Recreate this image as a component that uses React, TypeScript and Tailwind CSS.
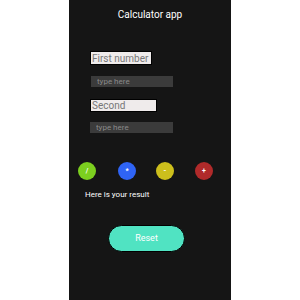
export default function App() {
  const ops = [
    { label: "/", bg: "bg-[#7ccf1f]", ml: "ml-[9px]" },
    { label: "*", bg: "bg-[#2f64f5]", ml: "ml-[22px]" },
    { label: "-", bg: "bg-[#cdbf1c]", ml: "ml-[20px]" },
    { label: "+", bg: "bg-[#b02a2a]", ml: "ml-[21px]" },
  ];

  return (
    <div className="flex h-[300px] w-[300px] justify-center bg-white font-['Roboto',sans-serif]">
      <div className="flex h-full w-[162px] flex-col bg-[#151515]">
        <h1 className="mt-[8px] text-center text-[10px] leading-[14px] text-white">
          Calculator app
        </h1>

        <input
          readOnly
          placeholder="First number"
          className="ml-[21px] mt-[29px] h-[14px] w-[62px] border border-black bg-[#efebeb] px-[1px] text-[10px] leading-[12px] text-[#444] outline-none placeholder:text-[#777]"
        />
        <input
          placeholder="type here"
          className="ml-[22px] mt-[11px] h-[11px] w-[82px] bg-[#3b3b3b] px-[6px] text-[8px] leading-[11px] text-white outline-none placeholder:text-[#8a8a8a]"
        />

        <input
          readOnly
          placeholder="Second"
          className="ml-[21px] mt-[12px] h-[13px] w-[67px] border border-black bg-[#efebeb] px-[1px] text-[10px] leading-[11px] text-[#444] outline-none placeholder:text-[#777]"
        />
        <input
          placeholder="type here"
          className="ml-[21px] mt-[10px] h-[11px] w-[83px] bg-[#3b3b3b] px-[6px] text-[8px] leading-[11px] text-white outline-none placeholder:text-[#8a8a8a]"
        />

        <div className="mt-[29px] flex">
          {ops.map((op) => (
            <button
              key={op.label}
              type="button"
              className={`${op.ml} ${op.bg} flex h-[18px] w-[18px] items-center justify-center rounded-full text-[7px] font-bold text-white`}
            >
              {op.label}
            </button>
          ))}
        </div>

        <p className="ml-[16px] mt-[9px] text-[8px] leading-[12px] text-white">
          Here is your result
        </p>

        <button
          type="button"
          className="ml-[39px] mt-[24px] h-[27px] w-[77px] rounded-full border border-black bg-[#50e3c2] text-[9px] text-white"
        >
          Reset
        </button>
      </div>
    </div>
  );
}
